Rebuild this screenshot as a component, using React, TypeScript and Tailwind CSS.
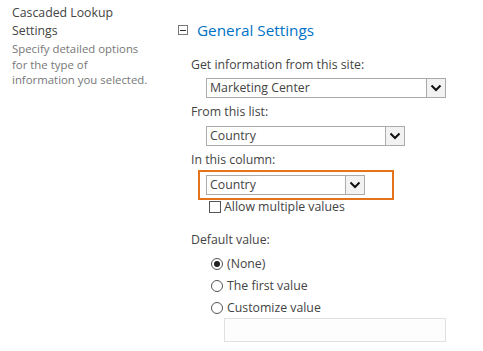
import React from 'react';

const font = { fontFamily: '"Segoe UI", "Open Sans", "Liberation Sans", sans-serif' };

function Chevron() {
	return (
		<svg width="12" height="8" viewBox="0 0 12 8">
			<path d="M1.5 1.5 L6 6 L10.5 1.5" fill="none" stroke="#111" strokeWidth="2" />
		</svg>
	);
}

function Select({ value, width }: { value: string; width: string }) {
	return (
		<div className={`flex h-[20px] items-stretch border border-[#ababab] bg-white ${width}`}>
			<span className="flex-1 truncate pl-[3px] text-[12.3px] leading-[18px] text-[#444]">{value}</span>
			<span className="flex w-[19px] items-center justify-center border-l border-[#ababab] bg-[#f2f2f2]">
				<Chevron />
			</span>
		</div>
	);
}

function Radio({ checked, label }: { checked?: boolean; label: string }) {
	return (
		<div className="flex h-[22px] items-center gap-[4px]">
			<span className="flex h-[12px] w-[12px] items-center justify-center rounded-full border border-[#555] bg-white">
				{checked && <span className="h-[6px] w-[6px] rounded-full bg-[#222]" />}
			</span>
			<span className="text-[12.3px] text-[#444]">{label}</span>
		</div>
	);
}

export default function App() {
	return (
		<div className="flex h-[351px] w-[483px] bg-white" style={font}>
			<div className="w-[178px] pl-[12px] pt-[4px]">
				<p className="text-[12.3px] leading-[18px] text-[#444]">
					Cascaded Lookup
					<br />
					Settings
				</p>
				<p className="mt-[1px] w-[150px] text-[11.4px] leading-[15.5px] text-[#777]">
					Specify detailed options
					<br />
					for the type of
					<br />
					information you selected.
				</p>
			</div>

			<div className="flex-1 pt-[19px]">
				<div className="flex items-center gap-[9px]">
					<span className="flex h-[10px] w-[10px] items-center justify-center border border-[#777]">
						<span className="h-px w-[6px] bg-[#333]" />
					</span>
					<span className="text-[15.3px] leading-[22px] text-[#0072c6]">General Settings</span>
				</div>

				<div className="mt-[15px] pl-[13px]">
					<p className="text-[12.3px] leading-[18px] text-[#444]">Get information from this site:</p>
					<div className="mt-[4px] pl-[15px]">
						<Select value="Marketing Center" width="w-[240px]" />
					</div>

					<p className="mt-[5px] text-[12.3px] leading-[18px] text-[#444]">From this list:</p>
					<div className="mt-[5px] pl-[15px]">
						<Select value="Country" width="w-[199px]" />
					</div>

					<p className="mt-[5px] text-[12.3px] leading-[18px] text-[#444]">In this column:</p>
					<div className="mt-[1px] ml-[7px] w-[196px] border-2 border-[#e3741c] py-[3px] pl-[6px]">
						<Select value="Country" width="w-[159px]" />
					</div>
					<div className="-mt-[2px] flex items-center gap-[3px] pl-[18px]">
						<span className="h-[12px] w-[12px] border border-[#555] bg-white" />
						<span className="text-[12.3px] leading-[18px] text-[#444]">Allow multiple values</span>
					</div>

					<p className="mt-[15px] text-[12.3px] leading-[18px] text-[#444]">Default value:</p>
					<div className="mt-[4px] pl-[20px]">
						<Radio checked label="(None)" />
						<Radio label="The first value" />
						<Radio label="Customize value" />
						<div className="ml-[13px] mt-[-1px] h-[24px] w-[222px] border border-[#e1e1e1] bg-[#fdfdfd]" />
					</div>
				</div>
			</div>
		</div>
	);
}
